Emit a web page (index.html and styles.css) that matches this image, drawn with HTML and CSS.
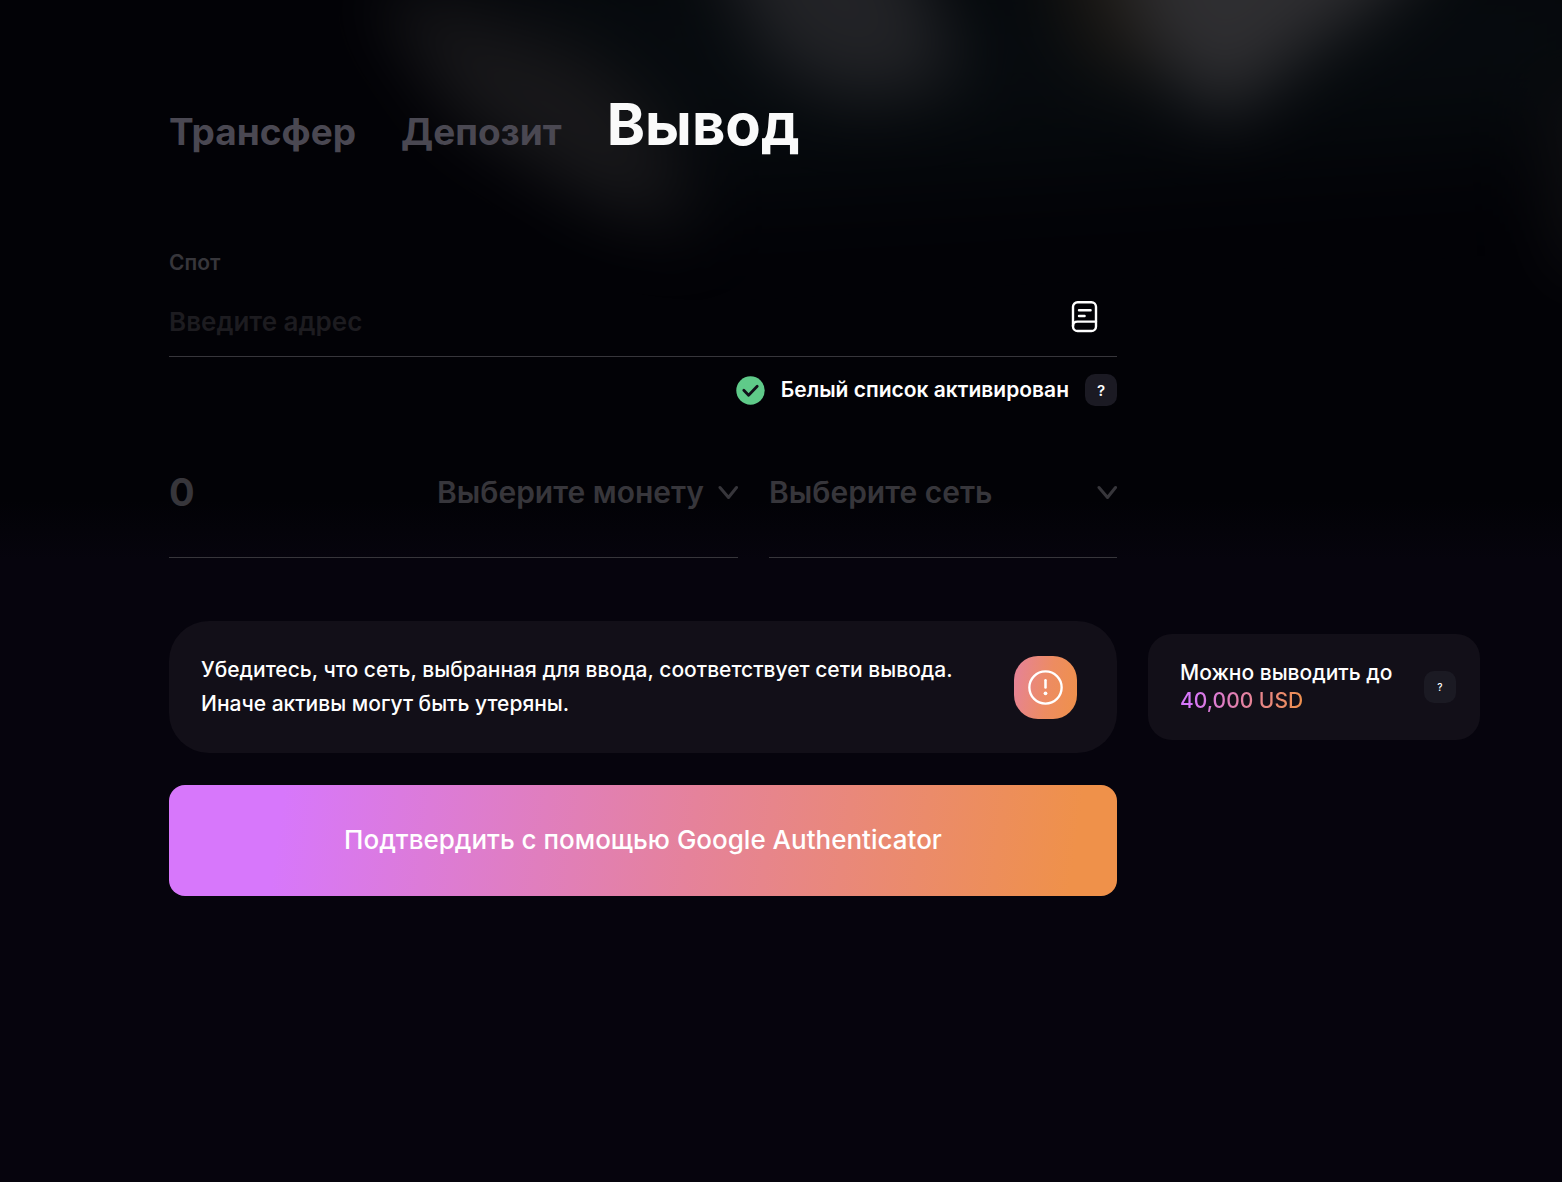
FILE: index.html
```html
<!DOCTYPE html>
<html lang="ru">
<head>
<meta charset="utf-8">
<meta name="viewport" content="width=device-width, initial-scale=1">
<title>Вывод</title>
<link rel="stylesheet" href="styles.css">
</head>
<body>
<svg class="backdrop" viewBox="0 0 1562 400" preserveAspectRatio="none" aria-hidden="true">
  <defs>
    <filter id="soft" x="-50%" y="-50%" width="200%" height="200%" color-interpolation-filters="sRGB"><feGaussianBlur stdDeviation="34"/></filter>
    <filter id="wide" x="-50%" y="-100%" width="200%" height="300%" color-interpolation-filters="sRGB"><feGaussianBlur stdDeviation="60"/></filter>
  </defs>
  <g opacity="0.2">
    <path d="M400-60H1640V130L1000 170 640 190z" fill="#1c3032" filter="url(#wide)"/>
    <g filter="url(#soft)">
      <path d="M370-10L440 0 580 50 660 120 690 230 590 200 460 120z" fill="#72706c"/>
      <path d="M700-80L900-80 960 80 850 100 770 60z" fill="#a2a6a8"/>
      <path d="M1040-80H1150V90L1080 50z" fill="#80704c"/>
      <path d="M1110-80H1460L1380 0 1320 40 1220 120 1150 50z" fill="#e0dedc"/>
      <path d="M1550 90H1620V270H1560z" fill="#484844"/>
    </g>
  </g>
</svg>
<main class="page">
  <nav class="tabs">
    <a class="tab" href="#transfer">Трансфер</a>
    <a class="tab" href="#deposit">Депозит</a>
    <a class="tab tab-active" href="#withdraw" aria-current="page">Вывод</a>
  </nav>

  <form class="layout">
    <div class="fields">
      <label class="label" for="address">Спот</label>
      <div class="address">
        <input class="input address-input" id="address" type="text" placeholder="Введите адрес">
        <button class="book" type="button" aria-label="Адресная книга">
          <svg width="36" height="36" viewBox="0 0 36 36" fill="none" stroke="#fff" stroke-width="2.4" stroke-linecap="round">
            <rect x="6" y="3.200" width="23" height="28.800" rx="4.600"/>
            <path d="M6 27c0-2.800 1.800-4.400 4.400-4.400h18.600M12 11.200h11.600M12 17h5.600"/>
          </svg>
        </button>
      </div>
      <div class="whitelist">
        <svg width="29" height="29" viewBox="0 0 29 29" fill="none" aria-hidden="true">
          <circle cx="14.500" cy="14.500" r="14.200" fill="#5fca89"/>
          <path d="M7.800 14.200l4.800 5 8.600-9" stroke="#11101a" stroke-width="2.800" stroke-linecap="round" stroke-linejoin="round"/>
        </svg>
        <span>Белый список активирован</span>
        <button class="help" type="button" aria-label="О белом списке">?</button>
      </div>
      <div class="choices">
        <div class="field">
          <input class="input amount" type="text" inputmode="decimal" placeholder="0" aria-label="Сумма">
          <div class="picker">
            <select class="select" aria-label="Монета"><option>Выберите монету</option></select>
            <svg class="chevron" width="20" height="16" viewBox="0 0 20 16" fill="none" aria-hidden="true"><path d="M2 3.500L10.500 13.500l8-10" stroke="#37363b" stroke-width="3" stroke-linecap="round" stroke-linejoin="round"/></svg>
          </div>
        </div>
        <div class="field">
          <div class="picker picker-wide">
            <select class="select" aria-label="Сеть"><option>Выберите сеть</option></select>
            <svg class="chevron" width="20" height="16" viewBox="0 0 20 16" fill="none" aria-hidden="true"><path d="M2 3.500L10.500 13.500l8-10" stroke="#37363b" stroke-width="3" stroke-linecap="round" stroke-linejoin="round"/></svg>
          </div>
        </div>
      </div>
    </div>

    <section class="notice">
      <p class="notice-text">Убедитесь, что сеть, выбранная для ввода, соответствует сети вывода.<br>Иначе активы могут быть утеряны.</p>
      <div class="notice-icon">
        <svg width="35" height="35" viewBox="0 0 36 36" fill="none" aria-hidden="true">
          <circle cx="18" cy="18" r="16.600" stroke="#fff" stroke-width="2.400"/>
          <path d="M18 10.500v7.500" stroke="#fff" stroke-width="2.600" stroke-linecap="round"/>
          <circle cx="18" cy="24" r="1.900" fill="#fff"/>
        </svg>
      </div>
    </section>

    <aside class="limit">
      <p class="limit-text">Можно выводить до<br><span class="limit-sum">40,000 USD</span></p>
      <button class="help help-small" type="button" aria-label="О лимите">?</button>
    </aside>

    <button class="submit" type="submit">Подтвердить с помощью Google Authenticator</button>
  </form>
</main>
</body>
</html>
```
FILE: styles.css
```css
*,
*::before,
*::after {
  box-sizing: border-box;
}

body {
  position: relative;
  margin: 0;
  min-height: 100vh;
  color: #fff;
  font-family: Inter, "Noto Sans", sans-serif;
  background: linear-gradient(#020206 0, #020206 500px, #06040d 560px, #06040d 100%) no-repeat #06040d;
}

p {
  margin: 0;
}

button,
input,
select {
  margin: 0;
  padding: 0;
  border: 0;
  color: inherit;
  font-family: inherit;
  background: none;
}

svg {
  display: block;
  flex: none;
}

.backdrop {
  position: absolute;
  top: 0;
  left: 0;
  z-index: -1;
  width: 100%;
  height: 400px;
}

.page {
  padding: 84px 82px 64px 169px;
}

.tabs {
  display: flex;
  align-items: baseline;
  gap: 45px;
  line-height: 80px;
}

.tab {
  color: #4a4852;
  font-size: 37px;
  font-weight: 700;
  text-decoration: none;
}

.tab-active {
  color: #fafafa;
  font-size: 58px;
}

.layout {
  display: grid;
  grid-template-columns: minmax(0, 1fr) 332px;
  align-items: center;
  column-gap: 31px;
  margin-top: 75px;
}

.fields {
  grid-area: 1 / 1;
}

.label {
  display: block;
  color: #37363b;
  font-size: 21px;
  font-weight: 600;
  line-height: 32px;
}

.address {
  display: flex;
  align-items: flex-start;
  padding: 20px 14px 13px 0;
  border-bottom: 1px solid #37363b;
}

.input {
  flex: 1;
  min-width: 0;
  outline: none;
  font-weight: 600;
}

.address-input {
  height: 44px;
  font-size: 26px;
}

.address-input::placeholder {
  color: #1d1c20;
  opacity: 1;
}

.book {
  cursor: pointer;
}

.whitelist {
  display: flex;
  align-items: center;
  justify-content: flex-end;
  gap: 16px;
  margin-top: 17px;
  font-size: 21px;
  font-weight: 600;
  line-height: 32px;
}

.help {
  flex: none;
  width: 32px;
  height: 32px;
  border-radius: 10px;
  color: #fff;
  font-size: 15px;
  font-weight: 600;
  background: #1b1a23;
}

.help-small {
  font-size: 10px;
  font-weight: 500;
}

.choices {
  display: grid;
  grid-template-columns: minmax(0, 569fr) minmax(0, 348fr);
  gap: 31px;
  margin-top: 66px;
}

.field {
  display: flex;
  align-items: center;
  height: 86px;
  padding-bottom: 45px;
  border-bottom: 1px solid #37363b;
}

.amount {
  height: 40px;
  font-size: 38px;
  font-weight: 700;
}

.amount::placeholder {
  color: #37363b;
  opacity: 1;
}

.picker {
  display: grid;
  align-items: center;
}

.picker-wide {
  flex: 1;
}

.select {
  grid-area: 1 / 1;
  height: 40px;
  padding-right: 33px;
  color: #37363b;
  font-size: 30px;
  font-weight: 600;
  appearance: none;
}

.chevron {
  grid-area: 1 / 1;
  justify-self: end;
  pointer-events: none;
}

.notice {
  grid-area: 2 / 1;
  display: flex;
  align-items: center;
  justify-content: space-between;
  gap: 24px;
  margin-top: 63px;
  padding: 32px 40px 32px 32px;
  border-radius: 40px;
  background: #120f18;
}

.notice-text {
  font-size: 21px;
  font-weight: 500;
  line-height: 34px;
}

.notice-icon {
  display: grid;
  flex: none;
  place-items: center;
  width: 63px;
  height: 63px;
  border-radius: 24px;
  background: linear-gradient(100deg, #e5829b, #ed8c61 55%, #ef914a);
}

.limit {
  grid-area: 2 / 2;
  display: flex;
  align-items: center;
  justify-content: space-between;
  margin-top: 63px;
  padding: 25px 24px 25px 32px;
  border-radius: 24px;
  background: #120f18;
}

.limit-text {
  font-size: 21px;
  font-weight: 500;
  line-height: 28px;
}

.limit-sum {
  color: transparent;
  background: linear-gradient(100deg, #d777fb 10%, #e5829b 55%, #ef914a);
  background-clip: text;
}

.submit {
  grid-area: 3 / 1;
  margin-top: 32px;
  padding: 37px 24px 39px;
  border-radius: 16px;
  color: #fff;
  font-size: 26px;
  font-weight: 500;
  line-height: 35px;
  background: linear-gradient(98deg, #d777fb 12%, #e5829b 55%, #ef914a 95%);
}
```
